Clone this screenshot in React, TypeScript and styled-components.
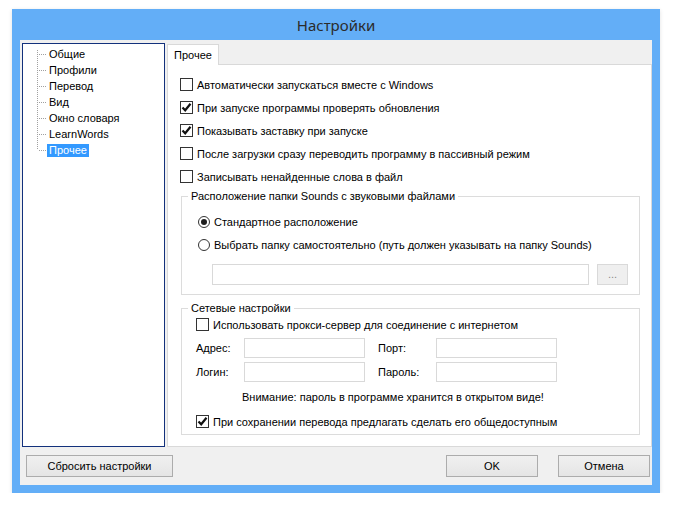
import React from 'react';
import styled, { createGlobalStyle } from 'styled-components';

const GlobalStyle = createGlobalStyle`
  body {
    margin: 0;
    background: #ffffff;
    font-family: "Liberation Sans", Arial, sans-serif;
    font-size: 11px;
    color: #000;
  }
`;

const Window = styled.div`
  margin: 9px 0 0 12px;
  width: 648px;
  height: 484px;
  background: #63aef7;
  display: flex;
  flex-direction: column;
  box-shadow: 0 1px 4px rgba(0, 0, 0, 0.12);
`;

const TitleBar = styled.div`
  height: 31px;
  display: flex;
  align-items: center;
  justify-content: center;
  padding-top: 1px;
  box-sizing: border-box;
  font-family: "Noto Sans", "Open Sans", sans-serif;
  font-size: 15px;
  color: #2b2b2b;
`;

const Client = styled.div`
  flex: 1;
  margin: 0 8px 8px;
  padding: 3px 1px 0 2px;
  background: #f0f0f0;
  display: grid;
  grid-template-columns: 143px 1fr;
  grid-template-rows: 404px 1fr;
  column-gap: 2px;
`;

const Tree = styled.div`
  border: 1px solid #13317c;
  background: #fff;
  padding: 2px 0 0 14px;
`;

const TreeItem = styled.div`
  height: 16px;
  display: flex;
  align-items: center;
`;

const TreeLabel = styled.span<{ $selected?: boolean }>`
  padding: 0 2px;
  line-height: 13px;
  background: ${(p) => (p.$selected ? '#3399ff' : 'transparent')};
  color: ${(p) => (p.$selected ? '#fff' : '#000')};
`;

const TabsColumn = styled.div`
  display: flex;
  flex-direction: column;
`;

const TabStrip = styled.div`
  height: 21px;
  display: flex;
  align-items: flex-end;
`;

const Tab = styled.div`
  height: 20px;
  margin-bottom: -1px;
  padding: 0 6px;
  border: 1px solid #d9d9d9;
  border-bottom: none;
  background: #fff;
  display: flex;
  align-items: center;
  position: relative;
  z-index: 1;
`;

const Panel = styled.div`
  flex: 1;
  border: 1px solid #d9d9d9;
  background: #fff;
  padding: 8px 11px 0 13px;
  display: flex;
  flex-direction: column;
`;

const OptionRow = styled.label<{ $indent?: number; $top?: number }>`
  height: 23px;
  display: flex;
  align-items: center;
  gap: 4px;
  margin-left: ${(p) => p.$indent ?? 0}px;
  margin-top: ${(p) => p.$top ?? 0}px;
`;

const Box = styled.span`
  width: 13px;
  height: 13px;
  box-sizing: border-box;
  border: 1px solid #333;
  background: #fff;
  display: flex;
  align-items: center;
  justify-content: center;
  flex-shrink: 0;
`;

const Circle = styled.span`
  width: 12px;
  height: 12px;
  box-sizing: border-box;
  border: 1px solid #333;
  border-radius: 50%;
  background: #fff;
  display: flex;
  align-items: center;
  justify-content: center;
  flex-shrink: 0;
`;

const Dot = styled.span`
  width: 6px;
  height: 6px;
  border-radius: 50%;
  background: #1e1e1e;
`;

const GroupBox = styled.div<{ $top: number; $pad: string }>`
  position: relative;
  margin-top: ${(p) => p.$top}px;
  border: 1px solid #dcdcdc;
  padding: ${(p) => p.$pad};
`;

const Legend = styled.span`
  position: absolute;
  top: -8px;
  left: 6px;
  padding: 0 3px;
  background: #fff;
  line-height: 15px;
`;

const PathRow = styled.div`
  display: flex;
  gap: 8px;
  margin: 8px 0 0 14px;
`;

const TextField = styled.div<{ $width: number; $height: number }>`
  width: ${(p) => p.$width}px;
  height: ${(p) => p.$height}px;
  box-sizing: border-box;
  border: 1px solid #d9d9d9;
  background: #fff;
`;

const BrowseButton = styled.div`
  width: 31px;
  height: 21px;
  box-sizing: border-box;
  border: 1px solid #d9d9d9;
  background: #efefef;
  color: #8a8a8a;
  font-size: 11px;
  display: flex;
  align-items: center;
  justify-content: center;
  padding-bottom: 2px;
`;

const FormGrid = styled.div`
  display: grid;
  grid-template-columns: 48px 121px 71px 121px;
  grid-auto-rows: 20px;
  row-gap: 4px;
  margin-top: 2px;
`;

const FieldLabel = styled.span<{ $inset?: boolean }>`
  display: flex;
  align-items: center;
  padding-left: ${(p) => (p.$inset ? 13 : 0)}px;
`;

const Note = styled.div`
  margin: 8px 0 0 46px;
  line-height: 15px;
`;

const ButtonRow = styled.div`
  grid-column: 1 / -1;
  display: flex;
  align-items: flex-start;
  padding: 8px 2px 0 4px;
  gap: 20px;
`;

const Button = styled.button<{ $width: number; $push?: boolean }>`
  width: ${(p) => p.$width}px;
  height: 22px;
  margin-left: ${(p) => (p.$push ? 'auto' : '0')};
  border: 1px solid #acacac;
  background: linear-gradient(#f0f0f0, #e5e5e5);
  font-family: "Liberation Sans", Arial, sans-serif;
  font-size: 11px;
  color: #000;
  padding: 0;
`;

const Check = () => (
  <svg width="11" height="11" viewBox="0 0 11 11">
    <path d="M1.5 5.5 L4.2 8.3 L9.5 1.8" fill="none" stroke="#111" strokeWidth="2.2" />
  </svg>
);

const Checkbox = ({
  checked,
  children,
  indent,
  top,
}: {
  checked?: boolean;
  children: React.ReactNode;
  indent?: number;
  top?: number;
}) => (
  <OptionRow $indent={indent} $top={top}>
    <Box>{checked && <Check />}</Box>
    <span>{children}</span>
  </OptionRow>
);

const Radio = ({ checked, children }: { checked?: boolean; children: React.ReactNode }) => (
  <OptionRow>
    <Circle>{checked && <Dot />}</Circle>
    <span>{children}</span>
  </OptionRow>
);

const Connector = ({ first, last }: { first?: boolean; last?: boolean }) => (
  <svg width="10" height="16" viewBox="0 0 10 16">
    <line x1="0.5" y1={first ? 4 : 0} x2="0.5" y2={last ? 8 : 16} stroke="#a0a0a0" strokeDasharray="1 1" />
    <line x1="2" y1="8.5" x2="10" y2="8.5" stroke="#a0a0a0" strokeDasharray="1 1" />
  </svg>
);

const treeItems = ['Общие', 'Профили', 'Перевод', 'Вид', 'Окно словаря', 'LearnWords', 'Прочее'];

const App: React.FC = () => {
  return (
    <>
      <GlobalStyle />
      <Window>
        <TitleBar>Настройки</TitleBar>
        <Client>
          <Tree>
            {treeItems.map((item, i) => (
              <TreeItem key={item}>
                <Connector first={i === 0} last={i === treeItems.length - 1} />
                <TreeLabel $selected={item === 'Прочее'}>{item}</TreeLabel>
              </TreeItem>
            ))}
          </Tree>
          <TabsColumn>
            <TabStrip>
              <Tab>Прочее</Tab>
            </TabStrip>
            <Panel>
              <Checkbox indent={-1}>Автоматически запускаться вместе с Windows</Checkbox>
              <Checkbox indent={-1} checked>При запуске программы проверять обновления</Checkbox>
              <Checkbox indent={-1} checked>Показывать заставку при запуске</Checkbox>
              <Checkbox indent={-1}>После загрузки сразу переводить программу в пассивный режим</Checkbox>
              <Checkbox indent={-1}>Записывать ненайденные слова в файл</Checkbox>

              <GroupBox $top={8} $pad="13px 11px 9px 16px">
                <Legend>Расположение папки Sounds с звуковыми файлами</Legend>
                <Radio checked>Стандартное расположение</Radio>
                <Radio>Выбрать папку самостоятельно (путь должен указывать на папку Sounds)</Radio>
                <PathRow>
                  <TextField $width={377} $height={21} />
                  <BrowseButton>...</BrowseButton>
                </PathRow>
              </GroupBox>

              <GroupBox $top={13} $pad="4px 11px 1px 14px">
                <Legend>Сетевые настройки</Legend>
                <Checkbox>Использовать прокси-сервер для соединение с интернетом</Checkbox>
                <FormGrid>
                  <FieldLabel>Адрес:</FieldLabel>
                  <TextField $width={121} $height={20} />
                  <FieldLabel $inset>Порт:</FieldLabel>
                  <TextField $width={121} $height={20} />
                  <FieldLabel>Логин:</FieldLabel>
                  <TextField $width={121} $height={20} />
                  <FieldLabel $inset>Пароль:</FieldLabel>
                  <TextField $width={121} $height={20} />
                </FormGrid>
                <Note>Внимание: пароль в программе хранится в открытом виде!</Note>
                <Checkbox checked top={5}>
                  При сохранении перевода предлагать сделать его общедоступным
                </Checkbox>
              </GroupBox>
            </Panel>
          </TabsColumn>
          <ButtonRow>
            <Button $width={147}>Сбросить настройки</Button>
            <Button $width={92} $push>
              OK
            </Button>
            <Button $width={92}>Отмена</Button>
          </ButtonRow>
        </Client>
      </Window>
    </>
  );
};

export default App;
